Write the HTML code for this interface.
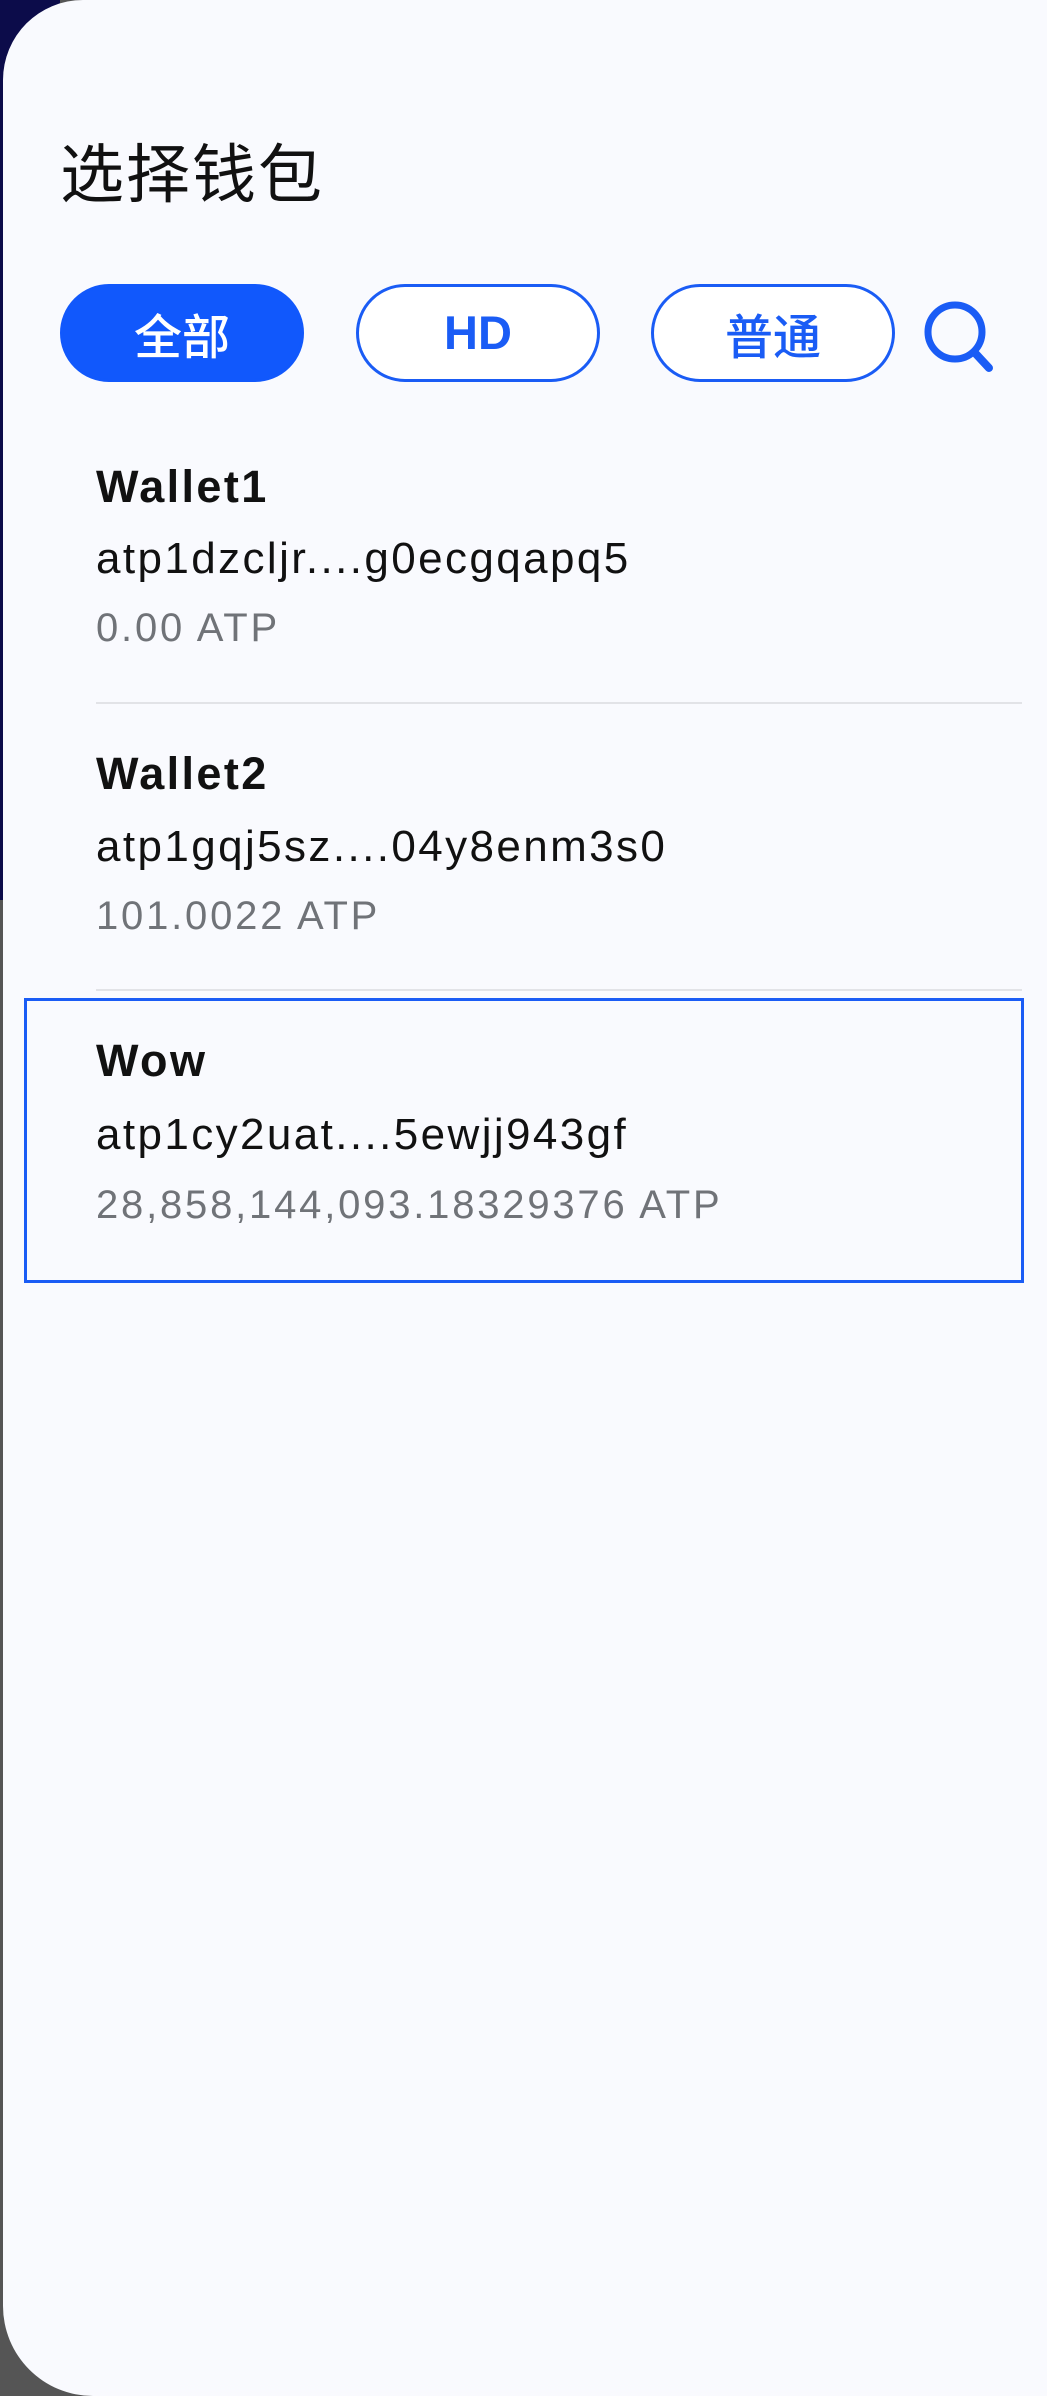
<!DOCTYPE html>
<html><head><meta charset="utf-8"><style>
html,body{margin:0;padding:0;}
body{width:1047px;height:2396px;position:relative;overflow:hidden;background:#555;font-family:"Liberation Sans","Noto Sans CJK SC",sans-serif;}
.navy{position:absolute;left:0;top:0;width:60px;height:900px;background:#0c0c4a;}
.page{position:absolute;left:3px;top:0;width:1044px;height:2396px;background:#f9fafe;border-radius:80px 0 0 90px;}
.title{position:absolute;left:60px;top:124px;font-size:64px;letter-spacing:2px;color:#111;font-family:"Noto Sans CJK SC",sans-serif;}
.tab{position:absolute;top:284px;height:98px;width:244px;box-sizing:border-box;border:3px solid #1a5cf5;border-radius:49px;background:#fff;color:#1a5cf5;font-size:48px;font-weight:500;text-align:center;line-height:92px;font-family:"Noto Sans CJK SC",sans-serif;}
.tab.on{background:#1158fc;color:#fff;border-color:#1158fc;}
.n{position:absolute;left:96px;font-size:45px;font-weight:600;color:#111;letter-spacing:2.4px;}
.a{position:absolute;left:96px;font-size:44px;color:#111;letter-spacing:2.4px;}
.m{position:absolute;left:96px;font-size:40px;color:#707378;letter-spacing:2.8px;}
.sep{position:absolute;left:96px;width:926px;height:2px;background:#e2e3e7;}
</style></head><body>
<div class="navy"></div>
<div class="page"></div>
<div class="title">选择钱包</div>
<div class="tab on" style="left:60px">全部</div>
<div class="tab" style="left:356px;font-family:'Liberation Sans',sans-serif;font-weight:bold;font-size:47px;">HD</div>
<div class="tab" style="left:651px">普通</div>
<svg style="position:absolute;left:918px;top:296px" width="80" height="80" viewBox="0 0 80 80"><circle cx="37" cy="36" r="27" fill="none" stroke="#1a5cf5" stroke-width="7"/><line x1="58" y1="58" x2="71" y2="72" stroke="#1a5cf5" stroke-width="8" stroke-linecap="round"/></svg>

<div class="n" style="top:461px">Wallet1</div>
<div class="a" style="top:534px">atp1dzcljr....g0ecgqapq5</div>
<div class="m" style="top:606px">0.00 ATP</div>
<div class="sep" style="top:702px"></div>

<div class="n" style="top:748px">Wallet2</div>
<div class="a" style="top:822px">atp1gqj5sz....04y8enm3s0</div>
<div class="m" style="top:894px">101.0022 ATP</div>
<div class="sep" style="top:989px"></div>

<div style="position:absolute;left:24px;top:998px;width:1000px;height:285px;box-sizing:border-box;border:3px solid #1a5cf5;"></div>
<div class="n" style="top:1035px">Wow</div>
<div class="a" style="top:1110px">atp1cy2uat....5ewjj943gf</div>
<div class="m" style="top:1183px">28,858,144,093.18329376 ATP</div>
</body></html>
